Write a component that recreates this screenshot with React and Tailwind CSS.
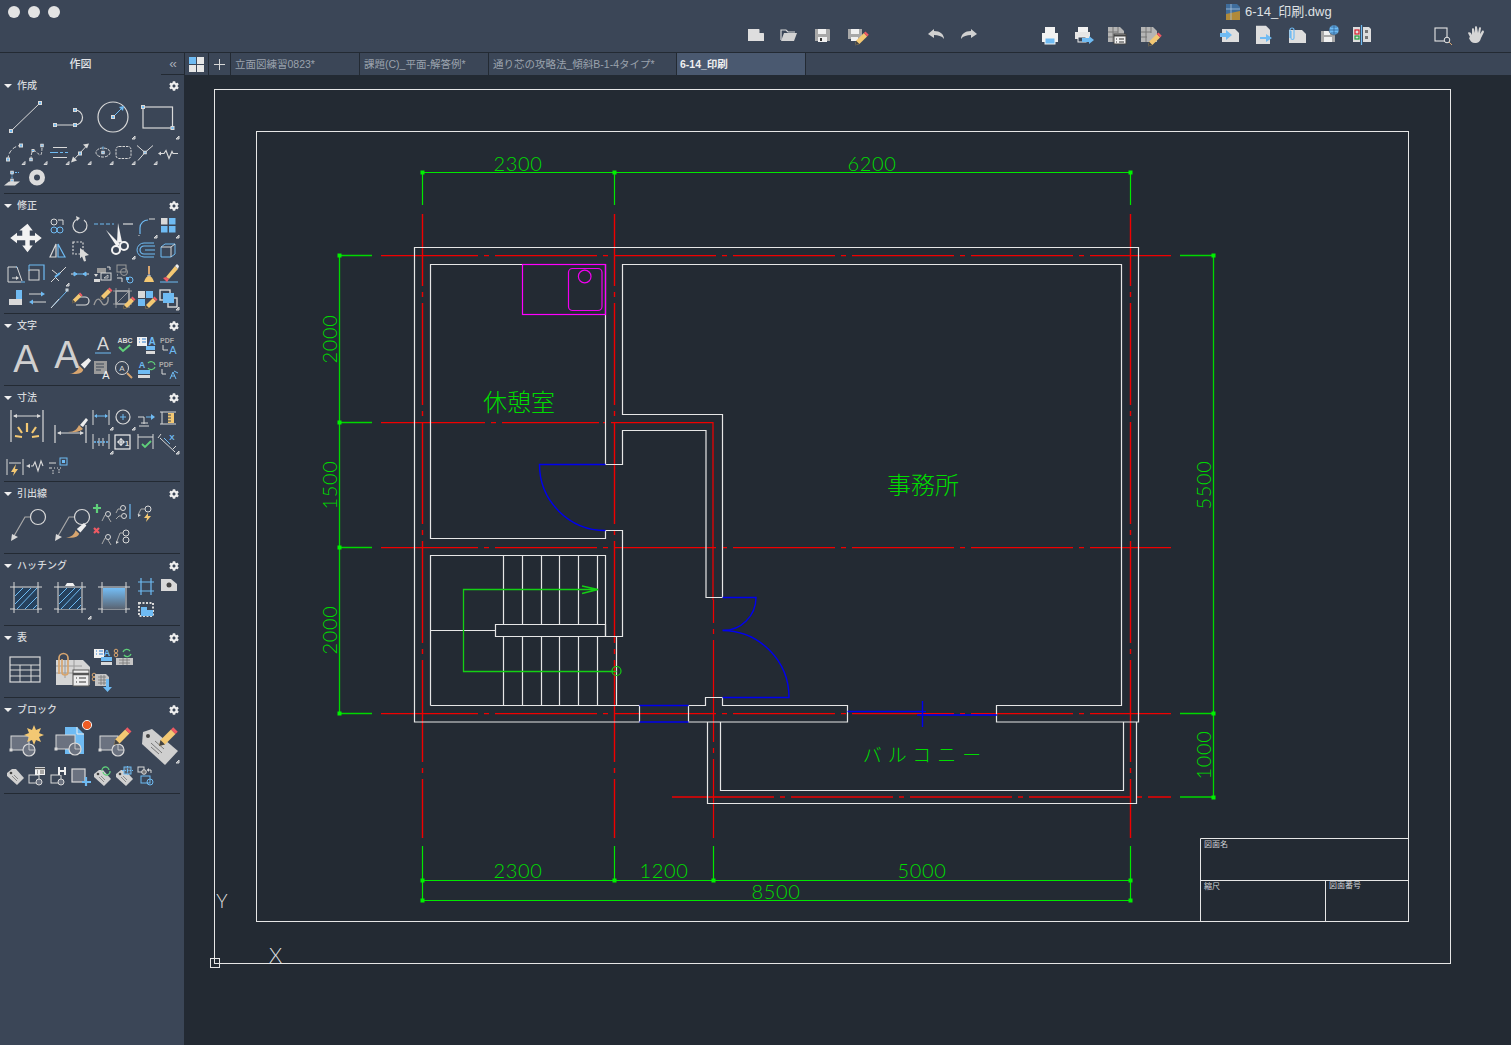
import React from 'react';
import { FaCog } from 'react-icons/fa';

const W = '#d9d9d9';
const G = '#a9a9a9';
const B = '#6fbbf3';
const Y = '#f3c873';
const T = '#d7a56f';
const R = '#ef5a63';
const N = '#5fd07a';

const Flag = () => <path d="M22 21v3h-3z" fill="#8d96a3" />;
const Hd = ({ x, y, s = 3 }) => <rect x={x - s / 2} y={y - s / 2} width={s} height={s} fill={B} />;

// small ribbon icon, one grid cell
const S = ({ flag, dy = 0, children }) => (
    <svg width="22" height="24" viewBox={`0 ${dy} 22 24`} fill="none" stroke={W} strokeWidth="1" className="block overflow-visible">
        {children}
        {flag && <Flag />}
    </svg>
);

// large ribbon icon, two columns by two rows
const L = ({ flag, children }) => (
    <svg width="44" height="48" viewBox="0 0 44 48" fill="none" stroke={W} strokeWidth="1" className="col-span-2 row-span-2 block overflow-visible">
        {children}
        {flag && <path d="M44 42v3h-3z" fill="#8d96a3" />}
    </svg>
);

const Tx = ({ x, y, size, fill = W, weight = 700, children }) => (
    <text x={x} y={y} fontSize={size} fill={fill} stroke="none" fontWeight={weight} textAnchor="middle" fontFamily="Liberation Sans, sans-serif">
        {children}
    </text>
);

const Brush = ({ x = 0, y = 0, s = 1 }) => (
    <g transform={`translate(${x} ${y}) scale(${s})`} stroke="none">
        <path d="M0 12c5 0 7-3 8-6l3 3c-1 3-5 4-11 3z" fill={T} />
        <path d="M9 5l6-5 2 2-5 6z" fill="#eee" />
    </g>
);

const Pencil = ({ x = 0, y = 0, s = 1 }) => (
    <g transform={`translate(${x} ${y}) scale(${s})`} stroke="none">
        <path d="M0 12l1-4 7-7 3 3-7 7z" fill={Y} />
        <path d="M8 1l1.500-1.500 3 3-1.500 1.500z" fill={R} />
        <path d="M0 12l1-4 3 3z" fill="#444" />
    </g>
);

const Block = ({ x = 0, y = 0, w = 18, h = 14 }) => (
    <g>
        <rect x={x} y={y} width={w} height={h} fill="#6b7280" stroke={W} />
        <rect x={x - 1.500} y={y + h - 1.500} width="3" height="3" fill={W} stroke="none" />
        <circle cx={x + w} cy={y + h} r="6" fill="#6b7280" stroke={W} strokeWidth="1.200" />
        <path d={`M${x + w} ${y + h - 6}v6h6`} stroke={W} strokeWidth=".8" />
    </g>
);

const Tag = ({ x = 0, y = 0 }) => (
    <g transform={`translate(${x} ${y})`} stroke="none">
        <path d="M0 4l5-4h4l8 9-7 7-10-9z" fill="#d0d0d0" />
        <circle cx="4" cy="4" r="1.300" fill="#444" />
        <path d="M5 7l5 5M7 6l4 4" stroke="#777" strokeWidth=".8" />
    </g>
);

const Leader = ({ x = 0, y = 0, s = 1 }) => (
    <g transform={`translate(${x} ${y}) scale(${s})`} strokeWidth="1.200">
        <circle cx="27" cy="8" r="7.500" stroke={W} />
        <path d="M19 8h-5L3 27" stroke={G} />
        <path d="M0 32l1-7 6 3z" fill={W} stroke="none" />
    </g>
);

const HatchBox = ({ fill }) => (
    <g>
        <path d="M7 13h32M11 8v31M35 8v31M7 35h32" strokeWidth="1" />
        <rect x="12" y="14" width="22" height="21" fill={fill || '#26415d'} stroke="none" />
        {!fill && <path d="M12 22l8-8M12 30l16-16M14 35l20-21M22 35l12-12M30 35l4-4" stroke={B} />}
    </g>
);

const SectionRows = [
    {
        title: '作成',
        icons: (
            <>
                <L>
                    <path d="M8 37L37 9" stroke={W} />
                    <Hd x={8} y={37} />
                    <Hd x={37} y={9} />
                </L>
                <L>
                    <path d="M8 31h20a7.500 7.500 0 0 0 0-15" strokeWidth="1.200" />
                    <Hd x={8} y={31} />
                    <Hd x={28} y={31} />
                    <Hd x={28} y={16} />
                </L>
                <L flag>
                    <circle cx="22" cy="23" r="15" strokeWidth="1.200" />
                    <path d="M22 23L32 13" stroke={B} />
                    <path d="M33 12l-5 1 4 4z" fill={B} stroke="none" />
                    <Hd x={22} y={23} />
                </L>
                <L flag>
                    <rect x="8" y="13" width="29.500" height="21" strokeWidth="1.200" />
                    <Hd x={8} y={13} />
                    <Hd x={37.500} y={34} />
                </L>
                <S flag dy={1.500}>
                    <path d="M5 19c0-7 5-13 12-14" strokeDasharray="4 2" />
                    <Hd x={5} y={19} />
                    <Hd x={18} y={5} />
                </S>
                <S flag dy={1.500}>
                    <path d="M6 19c0-10 3-10 6-7s5 6 5-7" strokeDasharray="3 1.500" />
                    <Hd x={6} y={19} s={2.500} />
                    <Hd x={17} y={5} s={2.500} />
                    <Hd x={8} y={10} s={2} />
                </S>
                <S flag dy={1.500}>
                    <path d="M6 7h14M6 17h14" />
                    <path d="M3 12h8M13 12h3M18 12h3" stroke={B} />
                </S>
                <S flag dy={1.500}>
                    <path d="M4 20L17 6" stroke={W} />
                    <path d="M20 3l-6 1 4 4zM2 22l2-6 4 4z" fill={W} stroke="none" />
                    <Hd x={11} y={13} />
                </S>
                <S flag dy={1.500}>
                    <ellipse cx="12" cy="12" rx="7" ry="4.500" strokeDasharray="3 1" />
                    <Hd x={12} y={12} s={2.500} />
                    <path d="M12 9V6" stroke={B} />
                </S>
                <S flag dy={1.500}>
                    <rect x="3" y="6" width="15" height="12" rx="3" strokeDasharray="2.500 1" />
                </S>
                <S flag dy={1.500}>
                    <path d="M2 5l8 7 8-7M10 12l-7 8" />
                    <Hd x={10} y={12} s={2.500} />
                </S>
                <S dy={1.500}>
                    <path d="M4 13h3l2-3 3 8 3-7 1 2h5" strokeWidth="1.200" />
                    <path d="M1 13l3-2v4z" fill={W} stroke="none" />
                </S>
                <S dy={1.500}>
                    <path d="M1 21l5-4h11l-5 4z" fill={W} stroke="none" />
                    <path d="M9 17V8h7" stroke={B} strokeDasharray="2 1" />
                    <Hd x={9} y={8} s={2.500} />
                    <Hd x={9} y={16} s={2.500} />
                </S>
                <S dy={1.500}>
                    <circle cx="12" cy="13" r="5.500" stroke="#dcdcdc" strokeWidth="5" />
                </S>
            </>
        ),
    },
    {
        title: '修正',
        icons: (
            <>
                <L>
                    <path d="M22 9l7 9h-4v7h7v-4l9 7-9 7v-4h-7v7h4l-7 9-7-9h4v-7H8v4l-9-7 9-7v4h7v-7h-4z" transform="translate(8 3) scale(.75)" fill="#f2f2f2" stroke="none" />
                </L>
                <S>
                    <circle cx="7" cy="8" r="3" stroke={W} />
                    <path d="M11 6h5v5" />
                    <circle cx="7" cy="16" r="3" stroke={B} />
                    <circle cx="13" cy="16" r="3" stroke={B} />
                </S>
                <S>
                    <path d="M15 6a7 7 0 1 1-6-1" strokeWidth="1.200" />
                    <path d="M7 2l4 2-3 3z" fill={W} stroke="none" />
                </S>
                <L flag>
                    <path d="M3 10h20" stroke={B} strokeDasharray="4 2" />
                    <path d="M32 10h10" strokeWidth="1.200" />
                    <path d="M15 16L29 30L26 33Z" fill="#f2f2f2" stroke="none" />
                    <path d="M27 9L31 28L26 29Z" fill="#f2f2f2" stroke="none" />
                    <circle cx="25" cy="36" r="4" stroke="#f2f2f2" strokeWidth="2" />
                    <circle cx="33" cy="32" r="4" stroke="#f2f2f2" strokeWidth="2" />
                </L>
                <S flag>
                    <path d="M5 20v-6c0-5 4-8 8-8" stroke={B} strokeWidth="1.200" />
                    <path d="M14 5h6M4 21v1" />
                </S>
                <S flag>
                    <rect x="4" y="4" width="6.500" height="6.500" fill={W} stroke="none" />
                    <rect x="12" y="4" width="6.500" height="6.500" fill={B} stroke="none" />
                    <rect x="4" y="12" width="6.500" height="6.500" fill={B} stroke="none" />
                    <rect x="12" y="12" width="6.500" height="6.500" fill={B} stroke="none" />
                </S>
                <S>
                    <path d="M9 6v13H3z" strokeWidth="1.200" />
                    <path d="M11 6v13h7z" stroke={B} strokeWidth="1.200" />
                </S>
                <S>
                    <rect x="4" y="4" width="10" height="12" strokeDasharray="2 1.500" strokeWidth="1.200" />
                    <path d="M11 10l9 7-4 1 1 5-2 .5-2-5-2 2z" fill={W} stroke="none" />
                </S>
                <S>
                    <path d="M20 8H9a4 4 0 0 0 0 8h11M20 12H10" stroke={B} strokeWidth="1.200" />
                    <path d="M19 5H9a7 7 0 0 0 0 14h10" stroke={B} />
                </S>
                <S>
                    <path d="M4 9l4-3h10v10l-4 3H4z" stroke={B} />
                    <path d="M4 9h10v10M14 9l4-3" stroke={W} />
                </S>
                <S>
                    <path d="M5 5h9l5 14" />
                    <path d="M5 5v15h13" stroke={W} />
                    <path d="M9 16h5" />
                    <path d="M13 14l3 2-3 2z" fill={W} stroke="none" />
                    <path d="M18 20l4 0M13 5h1" stroke={B} />
                </S>
                <S>
                    <rect x="4" y="12" width="10" height="10" transform="translate(0 -4)" />
                    <path d="M4 3h15v15" stroke={B} strokeWidth="1.200" />
                    <path d="M4 3v6" stroke={B} />
                </S>
                <S flag>
                    <path d="M4 20L9 15M13 11l6-6M5 8l5 4M9 16l3 3" />
                    <path d="M8 15l5-4" stroke={B} strokeWidth="2" />
                </S>
                <S>
                    <path d="M2 12h6M14 12h6" stroke={W} />
                    <path d="M8 12l-3-2v4zM14 12l3-2v4z" fill={B} stroke={B} />
                    <path d="M6 12h10" stroke={B} />
                </S>
                <S>
                    <path d="M6 6h9v5H6z" fill="#9a9a9a" stroke="none" />
                    <rect x="10" y="11" width="10" height="7" stroke={W} />
                    <path d="M13 16l4-3v3z" stroke={W} strokeWidth=".8" />
                    <path d="M3 12h4l-2 3z M3 17h6v3H3z" fill={W} stroke="none" />
                    <path d="M16 5h3v3" />
                </S>
                <S>
                    <rect x="4" y="3" width="9" height="7" stroke="#9a9a9a" />
                    <circle cx="11" cy="10" r="3.500" stroke="#9a9a9a" />
                    <path d="M4 13h1M4 16h5v4" />
                    <rect x="13" y="15" width="3" height="3" fill={B} stroke="none" />
                    <circle cx="17" cy="18" r="3" stroke={B} />
                </S>
                <S>
                    <path d="M14 4v10M12 14h4" stroke={W} />
                    <path d="M9 20c1-4 3-6 5-6s4 2 5 6z" fill={Y} stroke="none" />
                    <path d="M13 4h2v8h-2z" fill={T} stroke="none" />
                </S>
                <S>
                    <path d="M3 20h18" stroke={B} />
                    <path d="M9 15l9-11 3 3-9 10z" fill={Y} stroke="none" />
                    <path d="M6 16l3-1 3 2-2 3z" fill={R} stroke="none" />
                    <path d="M18 4l2-2 2 2-1 3z" fill="#eee" stroke="none" />
                </S>
                <S>
                    <rect x="13" y="4" width="6" height="9" fill={B} stroke="none" />
                    <rect x="6" y="13" width="13" height="6" fill={W} stroke="none" />
                </S>
                <S>
                    <path d="M4 8h13M8 16h13" stroke={W} />
                    <path d="M20 8l-4-2.500v5zM4 16l4-2.500v5z" fill={B} stroke="none" />
                </S>
                <S>
                    <path d="M4 22L20 5" stroke={B} />
                    <path d="M4 22l8-9" stroke={W} />
                    <Hd x={20} y={4} s={2} />
                </S>
                <S>
                    <path d="M11 11h5a4 4 0 0 1 0 8H7" strokeWidth="1.200" />
                    <Pencil x={3} y={7} s={.85} />
                </S>
                <S>
                    <path d="M3 19c3-9 6-6 8-2s7 1 6-6" stroke="#9a9a9a" strokeWidth="1.400" />
                    <Pencil x={9} y={2} />
                </S>
                <S>
                    <rect x="3" y="5" width="13" height="13" strokeWidth="1" />
                    <path d="M3 2v20M16 2v20M0 5h19M0 18h19M3 18L16 5" stroke={G} strokeWidth=".8" />
                    <Pencil x={10} y={11} />
                </S>
                <S>
                    <rect x="3" y="5" width="7" height="7" fill={W} stroke="none" />
                    <rect x="11" y="5" width="7" height="7" fill={B} stroke="none" />
                    <rect x="3" y="13" width="7" height="7" fill={B} stroke="none" />
                    <Pencil x={10} y={11} />
                </S>
                <S flag>
                    <rect x="3" y="4" width="10" height="10" stroke={W} strokeWidth="1.400" />
                    <rect x="11" y="12" width="9" height="9" stroke={W} strokeWidth="1.400" />
                    <rect x="6" y="7" width="11" height="10" fill={B} stroke="none" />
                </S>
            </>
        ),
    },
    {
        title: '文字',
        icons: (
            <>
                <L>
                    <Tx x={23} y={38} size={38} weight={400} fill="#d0d0d0">A</Tx>
                </L>
                <L>
                    <Tx x={20} y={34} size={38} weight={400} fill="#d0d0d0">A</Tx>
                    <Brush x={22} y={24} s={1.300} />
                </L>
                <S>
                    <Tx x={12} y={16} size={18} weight={400}>A</Tx>
                    <path d="M4 19h16" stroke={B} />
                </S>
                <S>
                    <Tx x={12} y={9} size={7}>ABC</Tx>
                    <path d="M6 13l4 4 7-6" stroke={N} strokeWidth="2" />
                </S>
                <S>
                    <rect x="2" y="3" width="10" height="9" fill="#f1f1f1" stroke="none" />
                    <path d="M4 5h1M7 5h4M4 8h1M7 8h4" stroke="#2f7fd1" />
                    <Tx x={17} y={11} size={10} fill={B}>A</Tx>
                    <rect x="11" y="12" width="9" height="4" fill={B} stroke="none" />
                    <rect x="11" y="17" width="9" height="3" fill={W} stroke="none" />
                </S>
                <S>
                    <Tx x={10} y={9} size={7} fill={G}>PDF</Tx>
                    <path d="M6 11v5h5" stroke={W} />
                    <Tx x={16} y={20} size={11} weight={400} fill={B}>A</Tx>
                </S>
                <S>
                    <rect x="3" y="3" width="13" height="13" fill="#9a9a9a" stroke="none" />
                    <path d="M5 6h8M5 9h8M5 12h5" stroke="#3b4657" />
                    <Tx x={15} y={21} size={11} weight={400} fill="#f0f0f0">A</Tx>
                </S>
                <S>
                    <circle cx="9" cy="10" r="6.500" />
                    <Tx x={9} y={13} size={8} weight={400}>A</Tx>
                    <path d="M14 15l5 5" stroke={T} strokeWidth="2" />
                </S>
                <S>
                    <Tx x={7} y={10} size={9} fill={B}>A</Tx>
                    <path d="M13 5a4 4 0 0 1 7 2M20 9a4 4 0 0 1-7 1" stroke={N} strokeWidth="1.200" />
                    <rect x="3" y="12" width="12" height="4" fill={B} stroke="none" />
                    <rect x="3" y="17" width="12" height="3" fill={W} stroke="none" />
                </S>
                <S>
                    <Tx x={9} y={9} size={7} fill={G}>PDF</Tx>
                    <path d="M5 11v5h4" stroke={W} />
                    <path d="M13 21l3-7 3 7M14 18h4M17 13l4 2" stroke={B} />
                </S>
            </>
        ),
    },
    {
        title: '寸法',
        icons: (
            <>
                <L>
                    <path d="M8 4v32M40 4v32M11 10h26" strokeWidth="1.200" />
                    <path d="M10 10l4-2v4zM38 10l-4-2v4z" fill={W} stroke="none" />
                    <path d="M24 17v9M15 21l4 6M33 21l-4 6M12 30l7 1M36 30l-7 1" stroke={Y} strokeWidth="2.200" />
                </L>
                <L>
                    <path d="M8 19v18M39 19v18M11 27h25" strokeWidth="1.200" />
                    <path d="M10 27l4-2v4zM37 27l-4-2v4z" fill={W} stroke="none" />
                    <path d="M21 26c7 0 9-3 11-7l4 4c-2 2-8 4-15 3z" fill={T} stroke="none" />
                    <path d="M33 19l6-7 2 2-5 7z" fill="#eee" stroke="none" />
                </L>
                <S flag>
                    <path d="M2 4v15M18 4v15" />
                    <path d="M4 10h12" stroke={B} />
                    <path d="M3 10l3-2v4zM17 10l-3-2v4z" fill={B} stroke="none" />
                </S>
                <S flag>
                    <circle cx="10" cy="11" r="7" stroke={W} strokeWidth="1.200" />
                    <path d="M7 11h6M10 8v6" stroke={B} />
                </S>
                <S>
                    <path d="M3 11h6M9 11v7M6 17h7M4 20h10" stroke={W} />
                    <path d="M11 11h8" stroke={B} />
                    <path d="M20 11l-4-3v6z" fill={B} stroke="none" />
                </S>
                <S>
                    <path d="M3 6h16M3 18h16" />
                    <path d="M5 6v12" />
                    <rect x="11" y="7" width="6" height="10" fill={Y} stroke="none" />
                    <path d="M11 9h3M11 12h3M11 15h3" stroke="#3b4657" />
                </S>
                <S flag>
                    <path d="M2 4v15M18 4v15M8 8v8M12 8v8" />
                    <path d="M3 12h14" stroke={B} strokeDasharray="2 1" strokeWidth="1.400" />
                </S>
                <S>
                    <rect x="2" y="5" width="15" height="14" stroke="#eee" strokeWidth="1.200" />
                    <path d="M8 8v8M4 12h8" stroke="#eee" strokeWidth="1.200" />
                    <circle cx="8" cy="12" r="2.500" stroke="#eee" />
                    <Tx x={14} y={16} size={8}>1</Tx>
                </S>
                <S>
                    <path d="M3 4v15M18 4v15M3 7h15" />
                    <path d="M7 14l3 3 6-6" stroke={N} strokeWidth="1.800" />
                </S>
                <S flag>
                    <path d="M3 8l15 14" />
                    <path d="M4 4L1 8M19 16l-3 3" />
                    <path d="M7 8l6 6" stroke={B} />
                    <Tx x={15} y={10} size={8} fill={B}>X</Tx>
                </S>
                <S>
                    <path d="M4 5v16M20 5v16M6 9h12" />
                    <path d="M13 10l-5 8h3l-1 4 5-7h-3z" fill={Y} stroke="none" />
                </S>
                <S>
                    <path d="M6 12h2l2-4 3 9 3-10 2 5" strokeWidth="1.100" />
                    <path d="M1 12l4-2v4z" fill={W} stroke="none" />
                </S>
                <S>
                    <path d="M2 9h7M2 14h3M7 14h1M10 14h1M13 14h1" stroke={W} />
                    <path d="M6 16v4M12 15v4" stroke={W} strokeDasharray="1.500 1" />
                    <rect x="13" y="4" width="7" height="7" stroke={B} />
                    <rect x="15" y="6" width="3" height="3" fill={B} stroke="none" />
                </S>
            </>
        ),
    },
    {
        title: '引出線',
        icons: (
            <>
                <L>
                    <Leader x={8} y={7} />
                </L>
                <L>
                    <Leader x={8} y={7} />
                    <Brush x={19} y={21} s={1.200} />
                </L>
                <S>
                    <path d="M6 2v9M2 6h8" stroke={N} strokeWidth="2.200" />
                    <circle cx="17" cy="12" r="2.500" />
                    <path d="M14 13l-3 6M17 15l3 5" stroke={G} />
                </S>
                <S>
                    <circle cx="10" cy="6" r="2.500" />
                    <circle cx="11" cy="14" r="2.500" />
                    <path d="M8 7l-3 0-2 4M9 14H6l-3 3" stroke={G} />
                    <path d="M17 2v15" stroke={B} strokeWidth="1.200" />
                </S>
                <S>
                    <circle cx="13" cy="7" r="3" />
                    <path d="M10 7H6l-3 6" stroke={G} />
                    <path d="M3 15l0-3 3 1z" fill={W} stroke="none" />
                    <path d="M13 11l-4 5h3l-1 4 5-6h-3z" fill={Y} stroke="none" />
                </S>
                <S />
                <S>
                    <path d="M3 2l5 5M8 2L3 7" stroke={R} strokeWidth="2.200" />
                    <circle cx="17" cy="11" r="2.500" />
                    <path d="M14 12l-3 6M17 14l3 5" stroke={G} />
                </S>
                <S>
                    <circle cx="13" cy="7" r="3" />
                    <circle cx="13" cy="14" r="3" />
                    <path d="M10 7H7l-3 8" stroke={G} />
                    <path d="M3 18l0-3 3 1z" fill={W} stroke="none" />
                </S>
            </>
        ),
    },
    {
        title: 'ハッチング',
        icons: (
            <>
                <L>
                    <HatchBox />
                </L>
                <L flag>
                    <HatchBox />
                    <path d="M18 12l2-3h6l2 3z" fill="#f2f2f2" stroke="none" />
                </L>
                <L>
                    <path d="M7 13h32M11 8v31M35 8v31M7 35h32" />
                    <defs>
                        <linearGradient id="hg" x1="0" y1="0" x2="0" y2="1">
                            <stop offset="0" stopColor="#74bdf5" />
                            <stop offset="1" stopColor="#5a6472" />
                        </linearGradient>
                    </defs>
                    <rect x="12" y="14" width="22" height="21" fill="url(#hg)" stroke="none" />
                </L>
                <S>
                    <path d="M3 8h16M3 17h16M6 4v17M16 4v17" stroke={B} strokeWidth="1.200" />
                </S>
                <S>
                    <path d="M4 5h10l6 5v7H4z" fill="#d8d8d8" stroke="none" />
                    <circle cx="12" cy="11" r="2.500" fill="#444" stroke="none" />
                </S>
                <S>
                    <rect x="4" y="5" width="14" height="13" stroke={W} strokeDasharray="2 1.500" strokeWidth="2" />
                    <path d="M6 9h6v3h6v6H6z" fill={B} stroke="none" />
                </S>
            </>
        ),
    },
    {
        title: '表',
        icons: (
            <>
                <L>
                    <rect x="7" y="11" width="30" height="25" strokeWidth="1.200" />
                    <path d="M7 19h30M7 24h30M7 30h30M17 19v17M28 19v17" />
                </L>
                <L>
                    <path d="M8 24h27l7 7v18H8z" transform="translate(1 -10)" fill="#d5d5d5" stroke="none" />
                    <path d="M9 20h26M9 27h26M18 14v18M27 14v18" stroke="#9a9a9a" />
                    <rect x="26" y="24" width="16" height="16" fill="#eee" stroke="#555" />
                    <path d="M26 28h16" stroke="#555" strokeWidth="2.500" />
                    <path d="M29 32h1M32 32h7M29 36h1M32 36h7" stroke="#333" />
                    <path d="M12 28V12a4.500 4.500 0 0 1 9 0v14a3 3 0 0 1-6 0V13" stroke={T} strokeWidth="1.700" />
                </L>
                <S>
                    <rect x="3" y="3" width="10" height="9" fill="#f1f1f1" stroke="none" />
                    <path d="M5 5h1M8 5h4M5 8h1M8 8h4" stroke="#2f7fd1" />
                    <Tx x={16} y={10} size={9} fill={B}>A</Tx>
                    <rect x="10" y="11" width="11" height="4" fill={B} stroke="none" />
                    <rect x="10" y="16" width="11" height="3" fill={W} stroke="none" />
                </S>
                <S>
                    <circle cx="3" cy="5" r="1.800" stroke={T} />
                    <circle cx="3" cy="9" r="1.800" stroke={T} />
                    <path d="M10 6a4 4 0 0 1 7-1M18 8a4 4 0 0 1-7 1" stroke={N} strokeWidth="1.300" />
                    <path d="M3 12h17v7H3z" fill="#c5c5c5" stroke="none" />
                    <path d="M6 14h11M6 17h11M10 12v7M14 12v7" stroke="#777" strokeWidth=".8" />
                </S>
                <S />
                <S />
                <S>
                    <circle cx="3" cy="5" r="1.800" stroke={T} />
                    <circle cx="3" cy="9" r="1.800" stroke={T} />
                    <path d="M4 4h11l3 3v9H4z" fill="#c5c5c5" stroke="none" />
                    <path d="M7 7h8M7 10h8M7 13h8M10 5v10M13 5v10" stroke="#777" strokeWidth=".8" />
                    <path d="M15 9h3v8h3l-4.500 5-4.500-5h3z" fill={B} stroke="none" />
                </S>
            </>
        ),
    },
    {
        title: 'ブロック',
        icons: (
            <>
                <L>
                    <Block x={8} y={18} w={18} />
                    <path d="M31 7l2 5 5-2-2 5 5 2-5 2 2 5-5-2-2 5-2-5-5 2 2-5-5-2 5-2-2-5 5 2z" fill={Y} stroke="none" />
                </L>
                <L>
                    <path d="M18 9h12l7 7v20H18z" fill={B} stroke="none" />
                    <path d="M30 9v7h7" stroke="#eee" />
                    <Block x={9} y={17} w={19} />
                    <circle cx="40" cy="7" r="4.600" fill="#ee5c24" stroke="#f2f2f2" strokeWidth="1" />
                </L>
                <L>
                    <Block x={9} y={18} w={18} />
                    <Pencil x={23} y={10} s={1.400} />
                </L>
                <L flag>
                    <path d="M8 16l9-3 26 22-13 14-23-21z" transform="translate(0 -2)" fill="#cfcfcf" stroke="none" />
                    <circle cx="13" cy="18" r="2" fill="#444" stroke="none" />
                    <path d="M16 25l11 10M20 23l9 8M16 29l8 7" stroke="#777" />
                    <Pencil x={24} y={10} s={1.500} />
                </L>
                <S dy={2}>
                    <Tag x={4} y={5} />
                </S>
                <S dy={2}>
                    <rect x="4" y="11" width="10" height="8" stroke={W} />
                    <circle cx="14" cy="18" r="3" fill="#6b7280" stroke={W} />
                    <rect x="10" y="3" width="10" height="8" fill="#f1f1f1" stroke="none" />
                    <path d="M10 4.500h10" stroke="#555" strokeWidth="1.400" />
                    <path d="M12 7h1M15 7h4M12 9h1M15 9h4" stroke="#333" strokeWidth=".8" />
                </S>
                <S dy={2}>
                    <rect x="4" y="11" width="10" height="8" stroke={W} />
                    <circle cx="14" cy="18" r="3" fill="#6b7280" stroke={W} />
                    <path d="M11 3h8v8h-8z" fill="#efefef" stroke="none" />
                    <rect x="13" y="3" width="4" height="3" fill="#3b4657" stroke="none" />
                    <rect x="13" y="8" width="4" height="3" fill="#3b4657" stroke="none" />
                </S>
                <S dy={2}>
                    <rect x="3" y="5" width="13" height="13" fill="#6b7280" stroke={W} strokeWidth="1.200" />
                    <path d="M17 13v9M13 18h9" stroke={B} strokeWidth="2.200" />
                </S>
                <S dy={2}>
                    <Tag x={3} y={6} />
                    <path d="M11 7a3.500 3.500 0 0 1 7-1M19 7a3.500 3.500 0 0 1-7 1" stroke={N} strokeWidth="1.300" />
                </S>
                <S dy={2}>
                    <Tag x={3} y={6} />
                    <rect x="11" y="3" width="7" height="7" fill="#5a6472" stroke={B} />
                    <path d="M9 6.500h11M14.500 2v9" stroke={B} strokeDasharray="1.500 1" />
                </S>
                <S dy={2}>
                    <rect x="3" y="3" width="6" height="5" stroke={W} />
                    <circle cx="9" cy="8" r="2.300" fill="#777" stroke={W} />
                    <path d="M12 6h4v3" />
                    <path d="M12 6l2-2v4z" fill={W} stroke="none" />
                    <rect x="6" y="12" width="9" height="7" stroke={B} />
                    <circle cx="15" cy="18" r="3" stroke={B} />
                </S>
            </>
        ),
    },
];

const Section = ({ title, icons }) => (
    <section>
        <div className="flex h-5 items-center pl-1 pr-[5px] pt-1">
            <svg width="8" height="4" viewBox="0 0 8 4" className="mr-[5px]">
                <path d="M0 0h8L4 4z" fill="#f0f0f0" />
            </svg>
            <span className="text-[10px] font-medium leading-none text-[#d6d9dd]">{title}</span>
            <FaCog className="ml-auto text-[10px] text-[#eeeeee]" />
        </div>
        <div className="grid grid-cols-[repeat(8,22px)] auto-rows-[24px] pl-[3px] pb-[3px]">{icons}</div>
        <div className="mx-1 h-px bg-[#232a33]" />
    </section>
);

const Sidebar = () => (
    <aside className="w-[184px] shrink-0 bg-[#3b4657]">
        <div className="flex h-[21px] items-start">
            <div className="flex h-[21px] flex-1 items-center justify-center pt-0.5 text-[11px] font-medium text-[#e2e4e7]">作図</div>
            <div className="flex h-[22px] w-[23px] items-center justify-center border-b border-[#232a33] text-[13px] text-[#aab0b9]">
                <span className="tracking-[-1px]">‹‹</span>
            </div>
        </div>
        {SectionRows.map((s) => (
            <Section key={s.title} title={s.title} icons={s.icons} />
        ))}
    </aside>
);

const Tool = ({ children }) => (
    <svg width="22" height="22" viewBox="0 0 22 22" fill="none" stroke={W} className="block shrink-0 overflow-visible">
        {children}
    </svg>
);

const Doc = () => <path d="M3 5h13l4 4v9H3z" fill="#dedede" stroke="none" />;

const Toolbar = () => (
    <div className="flex h-[29px] items-start justify-end pr-[24px] pt-px [&>svg]:ml-[11px]">
        <Tool><path d="M3 5h11l5 4.500V17H3z" fill="#dedede" stroke="none" /><path d="M14.500 5l4.500 4h-4.500z" fill="#3b4657" stroke="none" /></Tool>
        <Tool><path d="M3 16V6h5l2 2h7" stroke={W} strokeWidth="1.200" /><path d="M6 9h13l-3 8H3z" fill="#d2d2d2" stroke="none" /></Tool>
        <Tool><path d="M4 5h14a1 1 0 0 1 1 1v11H4z" fill="#a8a8a8" stroke="none" /><rect x="7" y="5" width="8" height="5" fill="#f0f0f0" stroke="none" /><rect x="7" y="13" width="9" height="5" fill="#f0f0f0" stroke="none" /><rect x="9" y="14" width="2" height="3" fill="#333" stroke="none" /></Tool>
        <Tool><path d="M4 5h14v10H4z" fill="#a8a8a8" stroke="none" /><rect x="7" y="5" width="8" height="5" fill="#f0f0f0" stroke="none" /><rect x="7" y="13" width="7" height="4" fill="#f0f0f0" stroke="none" /><Pencil x={11} y={8} s={1.100} /></Tool>
        <div className="w-12" />
        <Tool><path d="M8 6L2 11l6 4v-3c4 0 8 1 10 4 0-5-4-8-10-8z" fill="#d0d0d0" stroke="none" transform="translate(1 -1)" /></Tool>
        <Tool><path d="M14 6l6 5-6 4v-3c-4 0-8 1-10 4 0-5 4-8 10-8z" fill="#d0d0d0" stroke="none" transform="translate(-1 -1)" /></Tool>
        <div className="w-12" />
        <Tool><rect x="6" y="3" width="10" height="6" fill="#f2f2f2" stroke="none" /><path d="M3 9h16v9H3z" fill="#f2f2f2" stroke="none" /><rect x="6" y="14" width="10" height="6" fill={B} stroke="#f2f2f2" /></Tool>
        <Tool><rect x="6" y="3" width="10" height="5" fill="#f2f2f2" stroke="none" /><path d="M3 8h15v7H3z" fill="#e6e6e6" stroke="none" /><rect x="6" y="13" width="8" height="5" fill="#3b4657" stroke="#eee" /><path d="M10 16h7v-2l5 4-5 4v-2h-7z" fill={B} stroke="none" transform="translate(0 -2)" /></Tool>
        <Tool><path d="M3 3h12l4 4v11H3z" fill="#b5b5b5" stroke="none" /><path d="M8 3v15M13 3v6M3 8h10M3 13h6" stroke="#777" /><rect x="9" y="10" width="12" height="10" fill="#efefef" stroke="#444" /><path d="M9 11.500h12" stroke="#444" strokeWidth="2" /><path d="M11 15h1M14 15h5M11 18h1M14 18h5" stroke="#333" /></Tool>
        <Tool><path d="M3 3h12l4 4v11H3z" fill="#b5b5b5" stroke="none" /><path d="M8 3v15M13 3v6M3 8h10M3 13h6" stroke="#777" /><Pencil x={10} y={9} s={1.100} /></Tool>
        <div className="w-12" />
        <Tool><Doc /><path d="M1 9h6V6l6 5-6 5v-3H1z" fill={B} stroke="none" /></Tool>
        <Tool><path d="M4 3h10l4 4v15H4z" fill="#dedede" stroke="none" transform="translate(0 -1) scale(1 .95)" /><path d="M8 13h6v-3l6 4-6 4v-3H8z" fill={B} stroke="none" /></Tool>
        <Tool><path d="M4 6h13l4 4v9H4z" fill="#dedede" stroke="none" /><path d="M5 14V6a2 2 0 0 1 4 0v8a1.500 1.500 0 0 1-3 0V7" stroke={B} strokeWidth="1.200" /></Tool>
        <Tool><path d="M3 7h14v11H3z" fill="#a8a8a8" stroke="none" /><rect x="6" y="13" width="8" height="5" fill="#f0f0f0" stroke="none" /><rect x="6" y="7" width="6" height="4" fill="#f0f0f0" stroke="none" /><circle cx="16" cy="6" r="5" fill={B} stroke="#3b4657" strokeWidth=".6" /><path d="M11 6h10M16 1v10M13 3h6M13 9h6" stroke="#2a5d8f" strokeWidth=".7" /></Tool>
        <Tool><rect x="2" y="3" width="7" height="15" fill="#dedede" stroke="none" /><path d="M12 3h6l2 2v13h-8z" fill="#dedede" stroke="none" /><path d="M10.500 1v20" stroke={B} strokeWidth="1.200" /><rect x="4" y="6" width="4" height="4" stroke="#d81f2a" strokeWidth="1.200" /><rect x="4" y="12" width="4" height="3" stroke="#1f9d3a" strokeWidth="1.200" /><rect x="14" y="6" width="3" height="3" fill="#777" stroke="none" /><rect x="14" y="12" width="3" height="3" fill="#777" stroke="none" /></Tool>
        <div className="w-12" />
        <Tool><rect x="3" y="4" width="12" height="13" stroke="#e6e6e6" strokeWidth="1.100" /><circle cx="15" cy="16" r="2.800" fill="#3b4657" stroke="#e6e6e6" /><path d="M17 18l3 3" stroke={T} /></Tool>
        <Tool><path d="M5 13L3 9c0-1 2-1 3 0l1 2 0-6c0-1 2-1 2 0l1 4 0-6c0-1 2-1 2 0l1 6 1-5c0-1 2-1 2 0l-1 6 2-3c1-1 2 0 2 1l-3 6c-1 4-3 5-6 5s-5-2-6-5z" fill="#d5d5d5" stroke="none" /></Tool>
    </div>
);

const TitleBar = () => (
    <header className="h-[53px] shrink-0 border-b border-[#232a33] bg-[#3b4657]">
        <div className="flex h-[23px] items-center pl-2">
            <div className="flex gap-2">
                <span className="h-3 w-3 rounded-full bg-[#e3e3e3]" />
                <span className="h-3 w-3 rounded-full bg-[#e3e3e3]" />
                <span className="h-3 w-3 rounded-full bg-[#e3e3e3]" />
            </div>
            <div className="ml-[1166px] flex items-center gap-[5px] text-[13px] leading-none text-[#dfe1e4]">
                <svg width="14" height="16" viewBox="0 0 14 16">
                    <path d="M0 0h11l3 3v13H0z" fill="#3f6d9c" />
                    <path d="M0 10l14-3v9H0z" fill="#b08a3a" />
                    <path d="M0 5h14M5 0v16" stroke="#a9c4dd" strokeWidth=".8" />
                </svg>
                <span>6-14_印刷.dwg</span>
            </div>
        </div>
        <Toolbar />
    </header>
);

const tabs = [
    { name: '立面図練習0823*', w: 'w-[129px]' },
    { name: '課題(C)_平面-解答例*', w: 'w-[129px]' },
    { name: '通り芯の攻略法_傾斜B-1-4タイプ*', w: 'w-[188px]' },
];

const TabBar = () => (
    <nav className="flex h-[22px] shrink-0 items-stretch border-l border-[#232a33] bg-[#3b4657] text-[10.5px]">
        <div className="flex w-6 items-center justify-center border-r border-[#232a33]">
            <svg width="15" height="15" viewBox="0 0 15 15">
                <rect width="7" height="7" fill={B} />
                <rect x="8" width="7" height="7" fill="#e6e6e6" />
                <rect y="8" width="7" height="7" fill="#e6e6e6" />
                <rect x="8" y="8" width="7" height="7" fill="#e6e6e6" />
            </svg>
        </div>
        <div className="flex w-[22px] items-center justify-center border-r border-[#232a33]">
            <svg width="11" height="11" viewBox="0 0 11 11">
                <path d="M5.500 0v11M0 5.500h11" stroke="#d8d8d8" />
            </svg>
        </div>
        {tabs.map((t) => (
            <div key={t.name} className={`${t.w} flex items-center border-r border-[#232a33] pl-1 pt-px text-[#9aa2ad]`}>
                {t.name}
            </div>
        ))}
        <div className="flex w-[129px] items-center border-r border-[#232a33] bg-[#4a5970] pl-[3px] pt-px font-bold text-[#f0f0f0]">6-14_印刷</div>
    </nav>
);

const Wall = ({ d }) => <path d={d} stroke="#e6e6e6" strokeWidth="1.200" fill="none" />;

const Tick = ({ x, y }) => <rect x={x - 2} y={y - 2} width="4" height="4" fill="#00f000" />;

const Dim = ({ x, y, rot, children }) => (
    <text
        x={x}
        y={y}
        fontSize="20"
        fontFamily="Lato, sans-serif"
        fontWeight="300"
        fill="#00dc00"
        textAnchor="middle"
        letterSpacing=".7"
        transform={rot ? `rotate(-90 ${x} ${y})` : undefined}
    >
        {children}
    </text>
);

const Room = ({ x, y, size, spacing, children }) => (
    <text x={x} y={y} fontSize={size} fontFamily="Noto Sans CJK JP, sans-serif" fontWeight="300" fill="#00dc00" textAnchor="middle" letterSpacing={spacing}>
        {children}
    </text>
);

const Small = ({ x, y, children }) => (
    <text x={x} y={y} fontSize="8" fontFamily="Noto Sans CJK JP, sans-serif" fill="#cfd2d6">
        {children}
    </text>
);

// red centre lines share one long-short-long pattern
const Axis = ({ x1, y1, x2, y2, w = 1.250, off = 0 }) => (
    <line x1={x1} y1={y1} x2={x2} y2={y2} stroke="#f00000" strokeWidth={w} strokeDasharray="102 6 5 6" strokeDashoffset={off} />
);

const Drawing = () => (
    <svg viewBox="184 75 1327 970" className="block h-[970px] w-[1327px]" fill="none">
        {/* sheet frames */}
        <rect x="214.500" y="89.500" width="1236" height="874" stroke="#e6e6e6" />
        <rect x="256.500" y="131.500" width="1152" height="790" stroke="#e6e6e6" />
        <path d="M1200.500 921V838.500H1408M1200.500 880.500H1408M1325.500 880.500V921" stroke="#e6e6e6" />
        <Small x={1204} y={847}>図面名</Small>
        <Small x={1204} y={889}>縮尺</Small>
        <Small x={1329} y={888}>図面番号</Small>

        {/* centre lines */}
        <Axis x1={381} y1={255.500} x2={1171} y2={255.500} off={5} />
        <path d="M381 422.500H485M491 422.500H496M502 422.500H599M603 422.500H605M611 422.500H713V600" stroke="#f00000" strokeWidth="1.250" />
        <Axis x1={713.500} y1={600} x2={713.500} y2={838} off={-40} />
        <Axis x1={381} y1={547.500} x2={1171} y2={547.500} off={5} />
        <Axis x1={381} y1={713.500} x2={1171} y2={713.500} off={5} />
        <Axis x1={672} y1={797} x2={1171} y2={797} w={1.300} off={0} />
        <Axis x1={422.500} y1={214} x2={422.500} y2={838} w={1.400} off={30} />
        <Axis x1={614.500} y1={214} x2={614.500} y2={838} w={1.400} off={30} />
        <Axis x1={1130.500} y1={214} x2={1130.500} y2={838} w={1.400} off={30} />

        {/* walls */}
        <Wall d="M639.500 705.500V722H414.500V247.500H1138.500V722H996.500V705.500H1121.500V264.500H622.500V414.500H722.500V597.500H706V430.500H622.500V464.500H605.500V264.500H430.500V538.500H605.500V530.500H622.500V636.500H605.500" />
        <Wall d="M430.500 705.500V555.500H605.500V636.500M430.500 705.500H639.500M616.500 636.500V705.500" />
        <Wall d="M495.500 624.500H605.500V636.500H495.500ZM430.500 630.500H495.500" />
        <Wall d="M503.500 555.500V624.500M522.500 555.500V624.500M541.500 555.500V624.500M559.500 555.500V624.500M578.500 555.500V624.500M597.500 555.500V624.500" />
        <Wall d="M503.500 636.500V705.500M522.500 636.500V705.500M541.500 636.500V705.500M559.500 636.500V705.500M578.500 636.500V705.500M597.500 636.500V705.500" />
        <Wall d="M688.500 705.500V722H847.500V705.500H722.500V697.500H705.500V705.500H688.500" />
        <Wall d="M707.500 722V803.500H1136.500V722M720.500 722V790.500H1123.500V722" />

        {/* doors and windows */}
        <path
            d="M605.500 464.500H539.500A66 66 0 0 0 605.500 530.500M722.500 597.500H756A33 33 0 0 1 722.500 630.500A67 67 0 0 1 789 697.500H722.500M639.500 705.500H688.500M639.500 722H688.500M847.500 711.500H926M917 715H997M922.500 701V727"
            stroke="#0000ee"
            strokeWidth="1.400"
        />

        {/* sink */}
        <rect x="522.500" y="264.500" width="83" height="50" stroke="#ff00ff" strokeWidth="1.200" />
        <rect x="568.500" y="268.500" width="33.500" height="42" rx="4" stroke="#f000f0" strokeWidth="1.200" />
        <circle cx="584.700" cy="276.500" r="6.300" stroke="#f000f0" strokeWidth="1.200" />

        {/* stair arrow */}
        <path d="M597.500 589.500H463.500V671.500H616.500M582 586L598 589.500L582 593.500M582 589.500H598" stroke="#14d014" strokeWidth="1.300" />
        <circle cx="616.500" cy="671" r="4.500" stroke="#14d014" strokeWidth="1.200" />

        {/* dimensions */}
        <path d="M422.500 172.500H1130.500M422.500 172.500V205M614.500 172.500V205M1130.500 172.500V205" stroke="#00e800" strokeWidth="1.200" />
        <path d="M422.500 880.500H1130.500M422.500 900.500H1130.500M422.500 846V900.500M614.500 846V880.500M713.500 846V880.500M1130.500 846V900.500" stroke="#00e800" strokeWidth="1.200" />
        <path d="M339.500 255.500V713.500M338 255.500H372M338 422.500H372M338 547.500H372M338 713.500H372" stroke="#00d800" strokeWidth="1.300" />
        <path d="M1213.500 255.500V797M1180 255.500H1213.500M1180 713.500H1213.500M1180 797H1213.500" stroke="#00d800" strokeWidth="1.300" />
        {[[422, 172], [614, 172], [1130, 172], [422, 880], [614, 880], [713, 880], [1130, 880], [422, 900], [1130, 900], [339, 255], [339, 422], [339, 547], [339, 713], [1213, 255], [1213, 713], [1213, 797]].map(([x, y]) => (
            <Tick key={`${x}-${y}`} x={x + 0.5} y={y + 0.5} />
        ))}
        <Dim x={518} y={171}>2300</Dim>
        <Dim x={872} y={171}>6200</Dim>
        <Dim x={518} y={878}>2300</Dim>
        <Dim x={664} y={878}>1200</Dim>
        <Dim x={922} y={878}>5000</Dim>
        <Dim x={776} y={899}>8500</Dim>
        <Dim x={337} y={339} rot>2000</Dim>
        <Dim x={337} y={485} rot>1500</Dim>
        <Dim x={337} y={630} rot>2000</Dim>
        <Dim x={1211} y={485} rot>5500</Dim>
        <Dim x={1211} y={755} rot>1000</Dim>
        <Room x={519} y={411} size={24} spacing={0}>休憩室</Room>
        <Room x={923} y={494} size={24} spacing={0}>事務所</Room>
        <Room x={925} y={762} size={19} spacing={6}>バルコニー</Room>

        {/* UCS icon */}
        <rect x="210.500" y="958.500" width="9" height="9" stroke="#e6e6e6" />
        <text x="222" y="908" fontSize="19" fontFamily="Lato, sans-serif" fill="#dfdfdf" textAnchor="middle" fontWeight="300">Y</text>
        <text x="275.500" y="963" fontSize="21" fontFamily="Lato, sans-serif" fill="#dfdfdf" textAnchor="middle" fontWeight="300">X</text>
    </svg>
);

const App = () => (
    <div className="flex h-[1045px] w-[1511px] flex-col overflow-hidden bg-[#232a33] font-['Liberation_Sans','Noto_Sans_CJK_JP',sans-serif]">
        <TitleBar />
        <div className="flex min-h-0 flex-1">
            <Sidebar />
            <main className="flex min-w-0 flex-1 flex-col bg-[#232a33]">
                <TabBar />
                <Drawing />
            </main>
        </div>
    </div>
);

export default App;
